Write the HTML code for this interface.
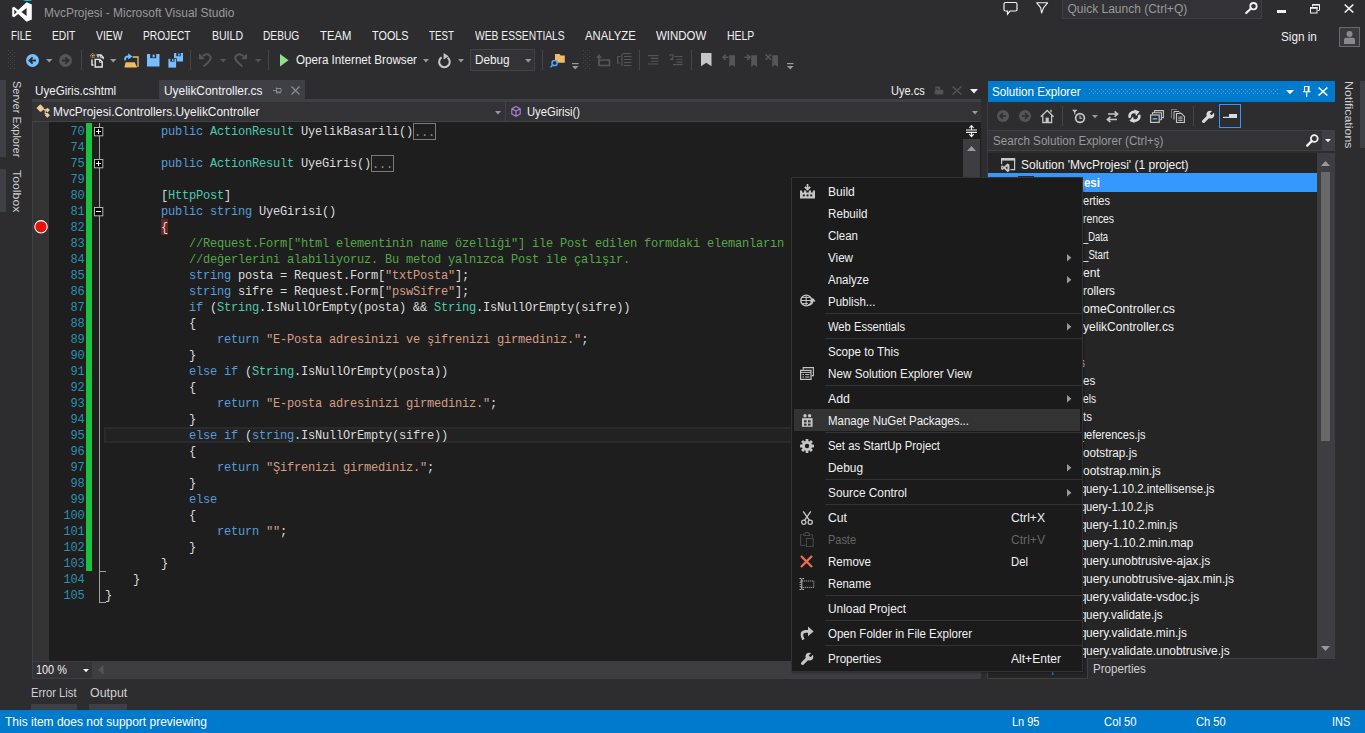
<!DOCTYPE html>
<html lang="tr"><head><meta charset="utf-8"><title>MvcProjesi - Microsoft Visual Studio</title>
<style>
*{margin:0;padding:0;box-sizing:border-box}
html,body{width:1365px;height:733px;overflow:hidden;background:#2d2d30}
body{font-family:"Liberation Sans",sans-serif;font-size:12px;color:#f1f1f1;position:relative}
#app{position:absolute;left:0;top:0;width:1365px;height:733px;overflow:hidden;background:#2d2d30}
.a{position:absolute}
.t{position:absolute;white-space:nowrap;line-height:16px;height:16px}
svg{position:absolute;overflow:visible}
.mono{font-family:"Liberation Mono",monospace;font-size:12px;letter-spacing:-0.2px}
.k{color:#569cd6}.ty{color:#4ec9b0}.s{color:#d69d85}.c{color:#57a64a}.p{color:#dcdcdc}
.ln{position:absolute;left:32px;width:52.5px;text-align:right;color:#2b91af;height:16px;line-height:16px;white-space:pre}
.cl{position:absolute;left:105px;height:16px;line-height:16px;white-space:pre;color:#dcdcdc}
</style></head>
<body><div id="app">
<!-- p10_top -->
<div class="a" style="left:19.5px;top:-6.6px;width:15.5px;height:8px;border-radius:50%;background:#00d8ff"></div>
<svg style="left:12px;top:2px" width="20" height="20" viewBox="0 0 20 20"><path d="M14.6 0.2 L19.8 2.4 V17.6 L14.6 19.8 L6.2 11.9 L2 15.2 L0.2 14.3 V5.7 L2 4.8 L6.2 8.1 Z M14.6 6 L9.4 10 L14.6 14 Z M2.3 7.6 V12.4 L4.9 10 Z" fill="#ffffff" fill-rule="evenodd"/></svg>
<div class="t" style="left:44.4px;top:5px;color:#999999;font-size:12.3px;font-weight:normal;transform:scaleX(0.9719);transform-origin:0 50%;">MvcProjesi - Microsoft Visual Studio</div>
<svg style="left:1003px;top:1px" width="16" height="15" viewBox="0 0 16 15"><path d="M2.5 1.5 H12.5 Q14 1.5 14 3 V8.5 Q14 10 12.5 10 H7 L4.5 13 V10 H2.5 Q1 10 1 8.5 V3 Q1 1.5 2.5 1.5 Z" fill="none" stroke="#f1f1f1" stroke-width="1.2"/></svg>
<svg style="left:1036px;top:2px" width="13" height="12" viewBox="0 0 13 12"><path d="M0.8 0.8 H11.6 L7.6 5.6 L5.6 11 L4.6 5.6 Z" fill="none" stroke="#f1f1f1" stroke-width="1.1" stroke-linejoin="round"/></svg>
<div class="a" style="left:1062px;top:0px;width:200px;height:19px;background:#333337;border:1px solid #3f3f46;border-top:none"></div>
<div class="t" style="left:1067.5px;top:1px;color:#999999;">Quick Launch (Ctrl+Q)</div>
<svg style="left:1245px;top:2px" width="13" height="12" viewBox="0 0 13 12"><circle cx="8.5" cy="4.2" r="3.2" fill="none" stroke="#f1f1f1" stroke-width="1.8"/><path d="M6 6.5 L1.2 11" stroke="#f1f1f1" stroke-width="2.2" stroke-linecap="round"/></svg>
<div class="a" style="left:1276.5px;top:9.5px;width:9.5px;height:3px;background:#f1f1f1;"></div>
<svg style="left:1310px;top:4px" width="10" height="10" viewBox="0 0 10 10"><path d="M2.5 0.5 H9.5 V6.5 H7.5 M2.5 0.5 V2.5" fill="none" stroke="#f1f1f1" stroke-width="1"/><rect x="2.5" y="0" width="7" height="1.6" fill="#f1f1f1"/><rect x="0.5" y="3.5" width="6.5" height="5.5" fill="none" stroke="#f1f1f1" stroke-width="1"/><rect x="0" y="3" width="7.5" height="1.8" fill="#f1f1f1"/></svg>
<svg style="left:1344px;top:4px" width="10" height="9" viewBox="0 0 10 9"><path d="M0.7 0.5 L9.3 8.5 M9.3 0.5 L0.7 8.5" stroke="#f1f1f1" stroke-width="1.7"/></svg>
<div class="t" style="left:1281.2px;top:29px;color:#f1f1f1;font-size:12.3px;font-weight:normal;transform:scaleX(0.9519);transform-origin:0 50%;">Sign in</div>
<div class="a" style="left:1339px;top:27px;width:21px;height:20px;background:#3a3a3d;border:1px solid #6a6a6e"></div>
<svg style="left:1343px;top:30px" width="13" height="14" viewBox="0 0 13 14"><circle cx="6.5" cy="4" r="3" fill="#8a8a8d"/><path d="M1 14 V9.5 Q1 7.8 3 7.8 H10 Q12 7.8 12 9.5 V14 Z" fill="#8a8a8d"/></svg>
<div class="t" style="left:11.1px;top:27.5px;color:#f1f1f1;font-size:12.4px;font-weight:normal;transform:scaleX(0.7833);transform-origin:0 50%;">FILE</div>
<div class="t" style="left:52.2px;top:27.5px;color:#f1f1f1;font-size:12.4px;font-weight:normal;transform:scaleX(0.8288);transform-origin:0 50%;">EDIT</div>
<div class="t" style="left:96.1px;top:27.5px;color:#f1f1f1;font-size:12.4px;font-weight:normal;transform:scaleX(0.8335);transform-origin:0 50%;">VIEW</div>
<div class="t" style="left:143px;top:27.5px;color:#f1f1f1;font-size:12.4px;font-weight:normal;transform:scaleX(0.8214);transform-origin:0 50%;">PROJECT</div>
<div class="t" style="left:211.6px;top:27.5px;color:#f1f1f1;font-size:12.4px;font-weight:normal;transform:scaleX(0.8493);transform-origin:0 50%;">BUILD</div>
<div class="t" style="left:263.2px;top:27.5px;color:#f1f1f1;font-size:12.4px;font-weight:normal;transform:scaleX(0.8235);transform-origin:0 50%;">DEBUG</div>
<div class="t" style="left:320.3px;top:27.5px;color:#f1f1f1;font-size:12.4px;font-weight:normal;transform:scaleX(0.9093);transform-origin:0 50%;">TEAM</div>
<div class="t" style="left:372.2px;top:27.5px;color:#f1f1f1;font-size:12.4px;font-weight:normal;transform:scaleX(0.8760);transform-origin:0 50%;">TOOLS</div>
<div class="t" style="left:429.3px;top:27.5px;color:#f1f1f1;font-size:12.4px;font-weight:normal;transform:scaleX(0.7862);transform-origin:0 50%;">TEST</div>
<div class="t" style="left:475.3px;top:27.5px;color:#f1f1f1;font-size:12.4px;font-weight:normal;transform:scaleX(0.8297);transform-origin:0 50%;">WEB ESSENTIALS</div>
<div class="t" style="left:585.2px;top:27.5px;color:#f1f1f1;font-size:12.4px;font-weight:normal;transform:scaleX(0.9127);transform-origin:0 50%;">ANALYZE</div>
<div class="t" style="left:656.4px;top:27.5px;color:#f1f1f1;font-size:12.4px;font-weight:normal;transform:scaleX(0.9269);transform-origin:0 50%;">WINDOW</div>
<div class="t" style="left:727.3px;top:27.5px;color:#f1f1f1;font-size:12.4px;font-weight:normal;transform:scaleX(0.8432);transform-origin:0 50%;">HELP</div>
<!-- p20_toolbar -->
<svg style="left:8px;top:50px" width="8" height="20" viewBox="0 0 8 20"><rect x="0" y="0" width="1" height="1" fill="#434347"/><rect x="4" y="0" width="1" height="1" fill="#434347"/><rect x="2" y="2" width="1" height="1" fill="#434347"/><rect x="6" y="2" width="1" height="1" fill="#434347"/><rect x="0" y="4" width="1" height="1" fill="#434347"/><rect x="4" y="4" width="1" height="1" fill="#434347"/><rect x="2" y="6" width="1" height="1" fill="#434347"/><rect x="6" y="6" width="1" height="1" fill="#434347"/><rect x="0" y="8" width="1" height="1" fill="#434347"/><rect x="4" y="8" width="1" height="1" fill="#434347"/><rect x="2" y="10" width="1" height="1" fill="#434347"/><rect x="6" y="10" width="1" height="1" fill="#434347"/><rect x="0" y="12" width="1" height="1" fill="#434347"/><rect x="4" y="12" width="1" height="1" fill="#434347"/><rect x="2" y="14" width="1" height="1" fill="#434347"/><rect x="6" y="14" width="1" height="1" fill="#434347"/><rect x="0" y="16" width="1" height="1" fill="#434347"/><rect x="4" y="16" width="1" height="1" fill="#434347"/><rect x="2" y="18" width="1" height="1" fill="#434347"/><rect x="6" y="18" width="1" height="1" fill="#434347"/></svg>
<svg style="left:25.5px;top:53.5px" width="13" height="13" viewBox="0 0 13 13"><circle cx="6.5" cy="6.5" r="6.5" fill="#75beff"/><path d="M10 6.5 H3.8 M6.6 3.4 L3.4 6.5 L6.6 9.6" fill="none" stroke="#2d2d30" stroke-width="1.8"/></svg>
<svg style="left:45.5px;top:58.8px" width="6.5" height="3.6" viewBox="0 0 6.5 3.6"><path d="M0 0H6.5L3.25 3.6Z" fill="#999"/></svg>
<svg style="left:59px;top:53.5px" width="13" height="13" viewBox="0 0 13 13"><circle cx="6.5" cy="6.5" r="6.5" fill="#555557"/><path d="M3 6.5 H9.2 M6.4 3.4 L9.6 6.5 L6.4 9.6" fill="none" stroke="#2d2d30" stroke-width="1.8"/></svg>
<div class="a" style="left:81px;top:50px;width:1px;height:20px;background:#464649;"></div>
<svg style="left:89.5px;top:52.5px" width="14" height="15" viewBox="0 0 14 15"><path d="M6.6 2 H11 L13.2 4.2 V6.2" fill="none" stroke="#e6e6e6" stroke-width="1.3"/><path d="M7 3.8 H9.4" stroke="#e6e6e6" stroke-width="1"/><path d="M10.6 1.8 V4.6 H13.2" fill="none" stroke="#e6e6e6" stroke-width="0.9"/><path d="M2 6.4 V12 H3.6" fill="none" stroke="#e6e6e6" stroke-width="1.4"/><path d="M5.2 6.4 H9.8 L12.2 8.8 V14 H5.2 Z" fill="#2d2d30" stroke="#e6e6e6" stroke-width="1.4"/><path d="M9.4 6.6 V9.2 H12" fill="none" stroke="#e6e6e6" stroke-width="0.9"/><path d="M2.8 0.2 V5.4 M0.2 2.8 H5.4 M0.9 0.9 L4.7 4.7 M4.7 0.9 L0.9 4.7" stroke="#f5c55e" stroke-width="1" stroke-dasharray="1 1"/></svg>
<svg style="left:110px;top:58.8px" width="6.5" height="3.6" viewBox="0 0 6.5 3.6"><path d="M0 0H6.5L3.25 3.6Z" fill="#999"/></svg>
<svg style="left:123.5px;top:52.5px" width="15" height="15" viewBox="0 0 15 15"><path d="M8.6 4 H14 V14" fill="none" stroke="#eebb66" stroke-width="1.3"/><path d="M0.4 14.4 L1.6 9.2 H10.8 L13.2 14.4 Z" fill="#eebb66"/><path d="M1.4 7.4 Q0 3.2 5 3.4" fill="none" stroke="#6ebeff" stroke-width="2"/><path d="M4.2 0.2 L8.4 3.4 L4.2 6.6 Z" fill="#6ebeff"/></svg>
<svg style="left:147px;top:53.5px" width="12.5" height="12.5" viewBox="0 0 12.5 12.5"><path d="M0 0 H12.5 V12.5 H0 Z" fill="#75beff"/><rect x="3.2" y="0" width="6" height="4.2" fill="#2d2d30"/><rect x="5.6" y="0.6" width="2" height="2.8" fill="#75beff"/></svg>
<svg style="left:168px;top:52.5px" width="15" height="15" viewBox="0 0 15 15"><path d="M6 0 H15 V8.5 H6 Z" fill="#75beff"/><rect x="8.3" y="0" width="4.5" height="3.2" fill="#2d2d30"/><rect x="10.2" y="0.5" width="1.5" height="2.2" fill="#75beff"/><path d="M0 5.5 H8.5 V15 H0 Z" fill="#75beff" stroke="#2d2d30" stroke-width="0.8"/><rect x="2.3" y="5.7" width="4.2" height="3" fill="#2d2d30"/><rect x="4" y="6.1" width="1.4" height="2.1" fill="#75beff"/></svg>
<div class="a" style="left:190px;top:50px;width:1px;height:20px;background:#464649;"></div>
<svg style="left:199px;top:53px" width="13" height="14" viewBox="0 0 13 14"><path d="M3.6 3.4 Q7 -0.3 10.6 2.4 Q13.4 5.2 9 9.6 L4.6 13.4" fill="none" stroke="#555557" stroke-width="2"/><path d="M0 0.3 V6.2 H6 Z" fill="#555557"/></svg>
<svg style="left:220px;top:58.8px" width="6.5" height="3.6" viewBox="0 0 6.5 3.6"><path d="M0 0H6.5L3.25 3.6Z" fill="#555557"/></svg>
<svg style="left:233.5px;top:53px" width="13" height="14" viewBox="0 0 13 14"><path d="M9.4 3.4 Q6 -0.3 2.4 2.4 Q-0.4 5.2 4 9.6 L8.4 13.4" fill="none" stroke="#555557" stroke-width="2"/><path d="M13 0.3 V6.2 H7 Z" fill="#555557"/></svg>
<svg style="left:255px;top:58.8px" width="6.5" height="3.6" viewBox="0 0 6.5 3.6"><path d="M0 0H6.5L3.25 3.6Z" fill="#555557"/></svg>
<div class="a" style="left:268px;top:50px;width:1px;height:20px;background:#464649;"></div>
<svg style="left:280px;top:54px" width="9" height="13" viewBox="0 0 9 13"><path d="M0 0 L8.5 6.3 L0 12.6 Z" fill="#8ae28a"/></svg>
<div class="t" style="left:296px;top:51.6px;color:#f1f1f1;font-size:12.3px;font-weight:normal;transform:scaleX(0.9467);transform-origin:0 50%;">Opera Internet Browser</div>
<svg style="left:423px;top:58.8px" width="6" height="3.6" viewBox="0 0 6 3.6"><path d="M0 0H6L3.0 3.6Z" fill="#999"/></svg>
<svg style="left:437.5px;top:53px" width="13" height="14.5" viewBox="0 0 13 14.5"><path d="M9.6 4.6 A5.3 5.3 0 1 1 3.6 4.4" fill="none" stroke="#c8c8c8" stroke-width="2"/><path d="M5.6 0 L10.6 3.2 L5.6 6.4 Z" fill="#c8c8c8"/></svg>
<svg style="left:458px;top:58.8px" width="6" height="3.6" viewBox="0 0 6 3.6"><path d="M0 0H6L3.0 3.6Z" fill="#999"/></svg>
<div class="a" style="left:470px;top:49px;width:65px;height:22px;background:#333337;border:1px solid #434346"></div>
<div class="t" style="left:474.5px;top:51.6px;color:#f1f1f1;font-size:12.3px;font-weight:normal;transform:scaleX(0.9517);transform-origin:0 50%;">Debug</div>
<svg style="left:525px;top:58.8px" width="6.5" height="3.6" viewBox="0 0 6.5 3.6"><path d="M0 0H6.5L3.25 3.6Z" fill="#999"/></svg>
<div class="a" style="left:542px;top:50px;width:1px;height:20px;background:#464649;"></div>
<svg style="left:550px;top:53px" width="15" height="15" viewBox="0 0 15 15"><path d="M5 1 H9.5 L10.8 2.5 H14.8 V9.8 H5 Z" fill="#eebb66"/><circle cx="4.6" cy="10" r="2.6" fill="#2d2d30" stroke="#4da6ff" stroke-width="1.5"/><path d="M2.8 11.8 L0.6 14.2" stroke="#4da6ff" stroke-width="1.7"/></svg>
<svg style="left:572px;top:62.5px" width="7" height="7" viewBox="0 0 7 7"><rect x="0" y="0" width="6.5" height="1.2" fill="#999"/><path d="M0 3 H6.5 L3.25 6.5 Z" fill="#999"/></svg>
<svg style="left:583px;top:50px" width="8" height="20" viewBox="0 0 8 20"><rect x="0" y="0" width="1" height="1" fill="#434347"/><rect x="4" y="0" width="1" height="1" fill="#434347"/><rect x="2" y="2" width="1" height="1" fill="#434347"/><rect x="6" y="2" width="1" height="1" fill="#434347"/><rect x="0" y="4" width="1" height="1" fill="#434347"/><rect x="4" y="4" width="1" height="1" fill="#434347"/><rect x="2" y="6" width="1" height="1" fill="#434347"/><rect x="6" y="6" width="1" height="1" fill="#434347"/><rect x="0" y="8" width="1" height="1" fill="#434347"/><rect x="4" y="8" width="1" height="1" fill="#434347"/><rect x="2" y="10" width="1" height="1" fill="#434347"/><rect x="6" y="10" width="1" height="1" fill="#434347"/><rect x="0" y="12" width="1" height="1" fill="#434347"/><rect x="4" y="12" width="1" height="1" fill="#434347"/><rect x="2" y="14" width="1" height="1" fill="#434347"/><rect x="6" y="14" width="1" height="1" fill="#434347"/><rect x="0" y="16" width="1" height="1" fill="#434347"/><rect x="4" y="16" width="1" height="1" fill="#434347"/><rect x="2" y="18" width="1" height="1" fill="#434347"/><rect x="6" y="18" width="1" height="1" fill="#434347"/></svg>
<svg style="left:596px;top:54px" width="14" height="12" viewBox="0 0 14 12"><path d="M3 0 L6 4 H0 Z" fill="#555557"/><rect x="2.3" y="3" width="1.5" height="8.5" fill="#555557"/><rect x="3" y="6" width="10.5" height="5.5" fill="none" stroke="#555557" stroke-width="1.6"/></svg>
<svg style="left:617px;top:53px" width="15" height="13.5" viewBox="0 0 15 13.5"><path d="M5.5 0.5 H14.5 M7 3.5 H14.5 M7 6.5 H14.5 M7 9.5 H14.5 M7 12.5 H14.5" stroke="#555557" stroke-width="1.2"/><path d="M5 1 V13 M0.6 3.5 H3.5 M0.6 3.5 V10 H3" fill="none" stroke="#555557" stroke-width="1.2"/></svg>
<div class="a" style="left:639px;top:50px;width:1px;height:20px;background:#464649;"></div>
<svg style="left:648px;top:55px" width="11" height="9.5" viewBox="0 0 11 9.5"><path d="M0 0.6 H10.5 M3 3.4 H10.5 M3 6.2 H10.5 M0 9 H10.5" stroke="#555557" stroke-width="1.1"/></svg>
<svg style="left:669px;top:54px" width="14" height="11" viewBox="0 0 14 11"><path d="M5.5 2.5 H13.5 M7.5 5.3 H13.5 M7.5 8.1 H13.5 M4 10.6 H13.5" stroke="#555557" stroke-width="1.1"/><path d="M0.8 2.2 Q1 0.5 2.8 0.6 Q4.6 0.8 4.2 2.6 Q3.8 4 2.5 5 M1 5.4 H4.4" fill="none" stroke="#555557" stroke-width="1.3"/></svg>
<div class="a" style="left:691px;top:50px;width:1px;height:20px;background:#464649;"></div>
<svg style="left:701px;top:53px" width="11" height="13.5" viewBox="0 0 11 13.5"><path d="M0 0 H10.5 V13.2 L5.25 9.8 L0 13.2 Z" fill="#c5c5c5"/></svg>
<svg style="left:722px;top:53.5px" width="13.5" height="13.5" viewBox="0 0 13.5 13.5"><path d="M6.5 3.2 H1.4 M3.8 0.6 L1 3.2 L3.8 5.8" fill="none" stroke="#555557" stroke-width="1.6"/><path d="M7.2 1.2 H13 V13 L10.1 10.8 L7.2 13 Z" fill="#555557"/></svg>
<svg style="left:744px;top:53.5px" width="13.5" height="13.5" viewBox="0 0 13.5 13.5"><path d="M0.5 3.2 H5.6 M3.2 0.6 L6 3.2 L3.2 5.8" fill="none" stroke="#555557" stroke-width="1.6"/><path d="M7.2 1.2 H13 V13 L10.1 10.8 L7.2 13 Z" fill="#555557"/></svg>
<svg style="left:765px;top:53.5px" width="13.5" height="13.5" viewBox="0 0 13.5 13.5"><path d="M0.6 0.4 L6 5.8 M6 0.4 L0.6 5.8" fill="none" stroke="#555557" stroke-width="1.6"/><path d="M7.2 1.2 H13 V13 L10.1 10.8 L7.2 13 Z" fill="#555557"/></svg>
<svg style="left:786.5px;top:62.5px" width="7" height="7" viewBox="0 0 7 7"><rect x="0" y="0" width="6.5" height="1.2" fill="#999"/><path d="M0 3 H6.5 L3.25 6.5 Z" fill="#999"/></svg>
<!-- p30_editor -->
<div class="a" style="left:0px;top:80px;width:6px;height:77px;background:#3f3f46;"></div>
<div class="a" style="left:0px;top:169px;width:6px;height:43px;background:#3f3f46;"></div>
<div class="t" style="left:25.3px;top:80.8px;color:#d0d0d0;font-size:11.8px;transform-origin:0 0;transform:rotate(90deg) scaleX(0.9322)">Server Explorer</div>
<div class="t" style="left:25.3px;top:169.6px;color:#d0d0d0;font-size:11.8px;transform-origin:0 0;transform:rotate(90deg) scaleX(1.0425)">Toolbox</div>
<div class="a" style="left:1360px;top:80.5px;width:5px;height:67px;background:#3f3f46;"></div>
<div class="t" style="left:1356.5px;top:80.5px;color:#d0d0d0;font-size:11.8px;transform-origin:0 0;transform:rotate(90deg) scaleX(1.0503)">Notifications</div>
<div class="t" style="left:35.4px;top:82.5px;color:#f1f1f1;font-size:12.3px;font-weight:normal;transform:scaleX(0.9432);transform-origin:0 50%;">UyeGiris.cshtml</div>
<div class="a" style="left:159px;top:80px;width:146px;height:21px;background:#3f3f46;"></div>
<div class="t" style="left:164.4px;top:82.5px;color:#f1f1f1;font-size:12.3px;font-weight:normal;transform:scaleX(0.9663);transform-origin:0 50%;">UyelikController.cs</div>
<svg style="left:273px;top:86px" width="9" height="9" viewBox="0 0 9 9"><path d="M0 4.5 H3.5 M3.5 1.5 V7.5 M3.5 2.5 H8 V6 H3.5 M3.5 6.8 H8" fill="none" stroke="#8b8b8e" stroke-width="1"/></svg>
<svg style="left:291px;top:86px" width="9" height="9" viewBox="0 0 9 9"><path d="M0.5 0.5 L8.5 8.5 M8.5 0.5 L0.5 8.5" stroke="#8b8b8e" stroke-width="1.3"/></svg>
<div class="t" style="left:890.5px;top:82.5px;color:#f1f1f1;font-size:12.3px;font-weight:normal;transform:scaleX(0.8964);transform-origin:0 50%;">Uye.cs</div>
<svg style="left:934px;top:86px" width="10" height="9" viewBox="0 0 10 9"><path d="M2 0.5 V4 M1.2 4.2 H8.8 V8 H1.2 Z M2 1 H5.5 V4" fill="#555557" stroke="#555557" stroke-width="1"/></svg>
<svg style="left:952px;top:86px" width="10" height="9" viewBox="0 0 10 9"><path d="M0.5 0.5 L9.5 8.5 M9.5 0.5 L0.5 8.5" stroke="#555557" stroke-width="1.4"/></svg>
<svg style="left:970px;top:89.3px" width="8" height="4.5" viewBox="0 0 8 4.5"><path d="M0 0H8L4.0 4.5Z" fill="#f1f1f1"/></svg>
<div class="a" style="left:32px;top:99px;width:949px;height:3px;background:#3f3f46;"></div>
<div class="a" style="left:979px;top:99px;width:2px;height:23px;background:#3f3f46;"></div>
<div class="a" style="left:32px;top:101.5px;width:949px;height:20px;background:#333337;"></div>
<div class="a" style="left:32px;top:121px;width:949px;height:1px;background:#434346;"></div>
<div class="a" style="left:505px;top:102px;width:1px;height:19px;background:#434346;"></div>
<div class="t" style="left:53.3px;top:103.5px;color:#f1f1f1;font-size:12.3px;font-weight:normal;transform:scaleX(0.9686);transform-origin:0 50%;">MvcProjesi.Controllers.UyelikController</div>
<svg style="left:495px;top:110.5px" width="6" height="3.5" viewBox="0 0 6 3.5"><path d="M0 0H6L3.0 3.5Z" fill="#999"/></svg>
<svg style="left:971.5px;top:110.5px" width="6" height="3.5" viewBox="0 0 6 3.5"><path d="M0 0H6L3.0 3.5Z" fill="#999"/></svg>
<svg style="left:36px;top:104px" width="15" height="14.5" viewBox="0 0 15 14.5"><rect x="1.6" y="1.4" width="5.4" height="5.4" fill="#eecb96" transform="rotate(45 4.3 4.1)"/><rect x="3.4" y="3.4" width="3.6" height="3.6" fill="#eecb96" transform="rotate(45 5.2 5.2)"/><path d="M6.5 5.5 H9.2 V9.6 H11" fill="none" stroke="#eecb96" stroke-width="1.1"/><rect x="9.8" y="4.4" width="3.4" height="3.4" fill="#eecb96" transform="rotate(45 11.5 6.1)"/><rect x="9.6" y="9.4" width="3.6" height="3.6" fill="#eecb96" transform="rotate(45 11.4 11.2)"/></svg>
<svg style="left:510.5px;top:106px" width="10" height="11" viewBox="0 0 10 11"><path d="M5 0.6 L9.2 2.8 V8 L5 10.3 L0.8 8 V2.8 Z M0.8 2.8 L5 5 L9.2 2.8 M5 5 V10.3" fill="none" stroke="#b180d7" stroke-width="1.1" stroke-linejoin="round"/></svg>
<div class="t" style="left:527px;top:103.5px;color:#f1f1f1;font-size:12.3px;font-weight:normal;transform:scaleX(0.9128);transform-origin:0 50%;">UyeGirisi()</div>
<div class="a" style="left:31.5px;top:122px;width:949px;height:539px;background:#1e1e1e;"></div>
<div class="a" style="left:31.5px;top:122px;width:1px;height:557px;background:#3f3f46;"></div>
<div class="a" style="left:32.5px;top:122px;width:16.5px;height:539px;background:#333333;"></div>
<div class="a" style="left:86.3px;top:122.5px;width:5.7px;height:448.5px;background:#19c23c;"></div>
<div class="a" style="left:98.8px;top:122.5px;width:1px;height:480px;background:#a0a0a0;"></div>
<div class="a" style="left:98.8px;top:570.5px;width:7px;height:1px;background:#a0a0a0;"></div>
<div class="a" style="left:98.8px;top:602px;width:7px;height:1px;background:#a0a0a0;"></div>
<svg style="left:94px;top:127.0px" width="9" height="9" viewBox="0 0 9 9"><rect x="0.5" y="0.5" width="8.3" height="8.3" fill="#000" stroke="#b4b4b4" stroke-width="1"/><rect x="2" y="4" width="5" height="1" fill="#fff"/><rect x="4" y="2" width="1" height="5" fill="#fff"/></svg>
<svg style="left:94px;top:159.0px" width="9" height="9" viewBox="0 0 9 9"><rect x="0.5" y="0.5" width="8.3" height="8.3" fill="#000" stroke="#b4b4b4" stroke-width="1"/><rect x="2" y="4" width="5" height="1" fill="#fff"/><rect x="4" y="2" width="1" height="5" fill="#fff"/></svg>
<svg style="left:94px;top:207.0px" width="9" height="9" viewBox="0 0 9 9"><rect x="0.5" y="0.5" width="8.3" height="8.3" fill="#000" stroke="#b4b4b4" stroke-width="1"/><rect x="2" y="4" width="5" height="1" fill="#fff"/></svg>
<div class="a" style="left:103.5px;top:427px;width:859.5px;height:16px;background:#222223;border:2px solid #2a2a2b"></div>
<svg style="left:33.5px;top:219.7px" width="14" height="14" viewBox="0 0 14 14"><circle cx="7" cy="6.8" r="6.2" fill="#e81008" stroke="#ffffff" stroke-width="1.1"/></svg>
<div class="a" style="left:161px;top:219px;width:7px;height:16px;background:#6b2524;"></div>
<div class="ln mono" style="top:124px">70</div>
<div class="cl mono" style="top:124px">        <span class="k">public</span> <span class="ty">ActionResult</span> UyelikBasarili()</div>
<div class="ln mono" style="top:140px">74</div>
<div class="ln mono" style="top:156px">75</div>
<div class="cl mono" style="top:156px">        <span class="k">public</span> <span class="ty">ActionResult</span> UyeGiris()</div>
<div class="ln mono" style="top:172px">79</div>
<div class="ln mono" style="top:188px">80</div>
<div class="cl mono" style="top:188px">        [<span class="ty">HttpPost</span>]</div>
<div class="ln mono" style="top:204px">81</div>
<div class="cl mono" style="top:204px">        <span class="k">public</span> <span class="k">string</span> UyeGirisi()</div>
<div class="ln mono" style="top:220px">82</div>
<div class="cl mono" style="top:220px">        {</div>
<div class="ln mono" style="top:236px">83</div>
<div class="cl mono" style="top:236px">            <span class="c">//Request.Form["html elementinin name özelliği"] ile Post edilen formdaki elemanların</span></div>
<div class="ln mono" style="top:252px">84</div>
<div class="cl mono" style="top:252px">            <span class="c">//değerlerini alabiliyoruz. Bu metod yalnızca Post ile çalışır.</span></div>
<div class="ln mono" style="top:268px">85</div>
<div class="cl mono" style="top:268px">            <span class="k">string</span> posta = Request.Form[<span class="s">"txtPosta"</span>];</div>
<div class="ln mono" style="top:284px">86</div>
<div class="cl mono" style="top:284px">            <span class="k">string</span> sifre = Request.Form[<span class="s">"pswSifre"</span>];</div>
<div class="ln mono" style="top:300px">87</div>
<div class="cl mono" style="top:300px">            <span class="k">if</span> (<span class="ty">String</span>.IsNullOrEmpty(posta) &amp;&amp; <span class="ty">String</span>.IsNullOrEmpty(sifre))</div>
<div class="ln mono" style="top:316px">88</div>
<div class="cl mono" style="top:316px">            {</div>
<div class="ln mono" style="top:332px">89</div>
<div class="cl mono" style="top:332px">                <span class="k">return</span> <span class="s">"E-Posta adresinizi ve şifrenizi girmediniz."</span>;</div>
<div class="ln mono" style="top:348px">90</div>
<div class="cl mono" style="top:348px">            }</div>
<div class="ln mono" style="top:364px">91</div>
<div class="cl mono" style="top:364px">            <span class="k">else</span> <span class="k">if</span> (<span class="ty">String</span>.IsNullOrEmpty(posta))</div>
<div class="ln mono" style="top:380px">92</div>
<div class="cl mono" style="top:380px">            {</div>
<div class="ln mono" style="top:396px">93</div>
<div class="cl mono" style="top:396px">                <span class="k">return</span> <span class="s">"E-posta adresinizi girmediniz."</span>;</div>
<div class="ln mono" style="top:412px">94</div>
<div class="cl mono" style="top:412px">            }</div>
<div class="ln mono" style="top:428px">95</div>
<div class="cl mono" style="top:428px">            <span class="k">else</span> <span class="k">if</span> (<span class="k">string</span>.IsNullOrEmpty(sifre))</div>
<div class="ln mono" style="top:444px">96</div>
<div class="cl mono" style="top:444px">            {</div>
<div class="ln mono" style="top:460px">97</div>
<div class="cl mono" style="top:460px">                <span class="k">return</span> <span class="s">"Şifrenizi girmediniz."</span>;</div>
<div class="ln mono" style="top:476px">98</div>
<div class="cl mono" style="top:476px">            }</div>
<div class="ln mono" style="top:492px">99</div>
<div class="cl mono" style="top:492px">            <span class="k">else</span></div>
<div class="ln mono" style="top:508px">100</div>
<div class="cl mono" style="top:508px">            {</div>
<div class="ln mono" style="top:524px">101</div>
<div class="cl mono" style="top:524px">                <span class="k">return</span> <span class="s">""</span>;</div>
<div class="ln mono" style="top:540px">102</div>
<div class="cl mono" style="top:540px">            }</div>
<div class="ln mono" style="top:556px">103</div>
<div class="cl mono" style="top:556px">        }</div>
<div class="ln mono" style="top:572px">104</div>
<div class="cl mono" style="top:572px">    }</div>
<div class="ln mono" style="top:588px">105</div>
<div class="cl mono" style="top:588px">}</div>
<div class="a mono" style="left:413px;top:122.9px;width:23px;height:17px;border:1px solid #7a7a7a;color:#8c8c8c;line-height:15px;padding-top:2.6px;text-align:center;overflow:hidden">...</div>
<div class="a mono" style="left:371px;top:154.9px;width:23px;height:17px;border:1px solid #7a7a7a;color:#8c8c8c;line-height:15px;padding-top:2.6px;text-align:center;overflow:hidden">...</div>
<div class="a" style="left:963px;top:122px;width:17px;height:539px;background:#3e3e42;"></div>
<div class="a" style="left:963px;top:122px;width:17px;height:17px;background:#1e1e1e;"></div>
<svg style="left:966px;top:125px" width="11" height="12" viewBox="0 0 11 12"><path d="M0 5 H11 M0 7.4 H11 M5.5 0.8 V5 M5.5 7.4 V11.4 M3.3 3 L5.5 0.6 L7.7 3 M3.3 9.2 L5.5 11.6 L7.7 9.2" fill="none" stroke="#f1f1f1" stroke-width="1.1"/></svg>
<svg style="left:967px;top:146px" width="9" height="5" viewBox="0 0 9 5"><path d="M0 5 L4.5 0 L9 5 Z" fill="#999"/></svg>
<div class="a" style="left:32.5px;top:661px;width:948px;height:18px;background:#3e3e42;"></div>
<div class="a" style="left:32.5px;top:662px;width:59px;height:15.5px;background:#333337;"></div>
<div class="t" style="left:35.8px;top:662px;color:#f1f1f1;font-size:12.3px;font-weight:normal;transform:scaleX(0.8832);transform-origin:0 50%;">100 %</div>
<svg style="left:83px;top:668.8px" width="6" height="3.3" viewBox="0 0 6 3.3"><path d="M0 0H6L3.0 3.3Z" fill="#f1f1f1"/></svg>
<svg style="left:97.8px;top:665.3px" width="5.5" height="9.5" viewBox="0 0 5.5 9.5"><path d="M5.5 0 L0 4.7 L5.5 9.5 Z" fill="#555558"/></svg>
<div class="t" style="left:31.4px;top:684.5px;color:#d0d0d0;font-size:12.3px;font-weight:normal;transform:scaleX(0.9140);transform-origin:0 50%;">Error List</div>
<div class="t" style="left:89.5px;top:684.5px;color:#d0d0d0;font-size:12.3px;font-weight:normal;transform:scaleX(1.0102);transform-origin:0 50%;">Output</div>
<div class="a" style="left:31px;top:704.3px;width:46px;height:6px;background:#3f3f46;"></div>
<div class="a" style="left:89px;top:704.3px;width:38px;height:6px;background:#3f3f46;"></div>
<div class="a" style="left:0px;top:710px;width:1365px;height:23px;background:#007acc;"></div>
<div class="t" style="left:4.8px;top:714px;color:#ffffff;font-size:12.3px;font-weight:normal;transform:scaleX(0.9744);transform-origin:0 50%;">This item does not support previewing</div>
<div class="t" style="left:1012.2px;top:714px;color:#ffffff;font-size:12.3px;font-weight:normal;transform:scaleX(0.8902);transform-origin:0 50%;">Ln 95</div>
<div class="t" style="left:1104.4px;top:714px;color:#ffffff;font-size:12.3px;font-weight:normal;transform:scaleX(0.9171);transform-origin:0 50%;">Col 50</div>
<div class="t" style="left:1196.2px;top:714px;color:#ffffff;font-size:12.3px;font-weight:normal;transform:scaleX(0.9078);transform-origin:0 50%;">Ch 50</div>
<div class="t" style="left:1331.7px;top:714px;color:#ffffff;font-size:12.3px;font-weight:normal;transform:scaleX(0.8927);transform-origin:0 50%;">INS</div>
<!-- p40_solexp -->
<div class="a" style="left:988px;top:81px;width:346.5px;height:598px;background:#2d2d30;"></div>
<div class="a" style="left:987.4px;top:102px;width:1px;height:577px;background:#3a3a3e;"></div>
<div class="a" style="left:988px;top:81px;width:346.5px;height:21px;background:#007acc;"></div>
<div class="t" style="left:992.4px;top:83.5px;color:#ffffff;font-size:12.3px;font-weight:normal;transform:scaleX(0.9460);transform-origin:0 50%;">Solution Explorer</div>
<svg style="left:1089px;top:89px" width="189" height="5" viewBox="0 0 189 5"><rect x="0" y="0" width="1" height="1" fill="#59a8de"/><rect x="4" y="0" width="1" height="1" fill="#59a8de"/><rect x="8" y="0" width="1" height="1" fill="#59a8de"/><rect x="12" y="0" width="1" height="1" fill="#59a8de"/><rect x="16" y="0" width="1" height="1" fill="#59a8de"/><rect x="20" y="0" width="1" height="1" fill="#59a8de"/><rect x="24" y="0" width="1" height="1" fill="#59a8de"/><rect x="28" y="0" width="1" height="1" fill="#59a8de"/><rect x="32" y="0" width="1" height="1" fill="#59a8de"/><rect x="36" y="0" width="1" height="1" fill="#59a8de"/><rect x="40" y="0" width="1" height="1" fill="#59a8de"/><rect x="44" y="0" width="1" height="1" fill="#59a8de"/><rect x="48" y="0" width="1" height="1" fill="#59a8de"/><rect x="52" y="0" width="1" height="1" fill="#59a8de"/><rect x="56" y="0" width="1" height="1" fill="#59a8de"/><rect x="60" y="0" width="1" height="1" fill="#59a8de"/><rect x="64" y="0" width="1" height="1" fill="#59a8de"/><rect x="68" y="0" width="1" height="1" fill="#59a8de"/><rect x="72" y="0" width="1" height="1" fill="#59a8de"/><rect x="76" y="0" width="1" height="1" fill="#59a8de"/><rect x="80" y="0" width="1" height="1" fill="#59a8de"/><rect x="84" y="0" width="1" height="1" fill="#59a8de"/><rect x="88" y="0" width="1" height="1" fill="#59a8de"/><rect x="92" y="0" width="1" height="1" fill="#59a8de"/><rect x="96" y="0" width="1" height="1" fill="#59a8de"/><rect x="100" y="0" width="1" height="1" fill="#59a8de"/><rect x="104" y="0" width="1" height="1" fill="#59a8de"/><rect x="108" y="0" width="1" height="1" fill="#59a8de"/><rect x="112" y="0" width="1" height="1" fill="#59a8de"/><rect x="116" y="0" width="1" height="1" fill="#59a8de"/><rect x="120" y="0" width="1" height="1" fill="#59a8de"/><rect x="124" y="0" width="1" height="1" fill="#59a8de"/><rect x="128" y="0" width="1" height="1" fill="#59a8de"/><rect x="132" y="0" width="1" height="1" fill="#59a8de"/><rect x="136" y="0" width="1" height="1" fill="#59a8de"/><rect x="140" y="0" width="1" height="1" fill="#59a8de"/><rect x="144" y="0" width="1" height="1" fill="#59a8de"/><rect x="148" y="0" width="1" height="1" fill="#59a8de"/><rect x="152" y="0" width="1" height="1" fill="#59a8de"/><rect x="156" y="0" width="1" height="1" fill="#59a8de"/><rect x="160" y="0" width="1" height="1" fill="#59a8de"/><rect x="164" y="0" width="1" height="1" fill="#59a8de"/><rect x="168" y="0" width="1" height="1" fill="#59a8de"/><rect x="172" y="0" width="1" height="1" fill="#59a8de"/><rect x="176" y="0" width="1" height="1" fill="#59a8de"/><rect x="180" y="0" width="1" height="1" fill="#59a8de"/><rect x="184" y="0" width="1" height="1" fill="#59a8de"/><rect x="188" y="0" width="1" height="1" fill="#59a8de"/><rect x="2" y="2" width="1" height="1" fill="#59a8de"/><rect x="6" y="2" width="1" height="1" fill="#59a8de"/><rect x="10" y="2" width="1" height="1" fill="#59a8de"/><rect x="14" y="2" width="1" height="1" fill="#59a8de"/><rect x="18" y="2" width="1" height="1" fill="#59a8de"/><rect x="22" y="2" width="1" height="1" fill="#59a8de"/><rect x="26" y="2" width="1" height="1" fill="#59a8de"/><rect x="30" y="2" width="1" height="1" fill="#59a8de"/><rect x="34" y="2" width="1" height="1" fill="#59a8de"/><rect x="38" y="2" width="1" height="1" fill="#59a8de"/><rect x="42" y="2" width="1" height="1" fill="#59a8de"/><rect x="46" y="2" width="1" height="1" fill="#59a8de"/><rect x="50" y="2" width="1" height="1" fill="#59a8de"/><rect x="54" y="2" width="1" height="1" fill="#59a8de"/><rect x="58" y="2" width="1" height="1" fill="#59a8de"/><rect x="62" y="2" width="1" height="1" fill="#59a8de"/><rect x="66" y="2" width="1" height="1" fill="#59a8de"/><rect x="70" y="2" width="1" height="1" fill="#59a8de"/><rect x="74" y="2" width="1" height="1" fill="#59a8de"/><rect x="78" y="2" width="1" height="1" fill="#59a8de"/><rect x="82" y="2" width="1" height="1" fill="#59a8de"/><rect x="86" y="2" width="1" height="1" fill="#59a8de"/><rect x="90" y="2" width="1" height="1" fill="#59a8de"/><rect x="94" y="2" width="1" height="1" fill="#59a8de"/><rect x="98" y="2" width="1" height="1" fill="#59a8de"/><rect x="102" y="2" width="1" height="1" fill="#59a8de"/><rect x="106" y="2" width="1" height="1" fill="#59a8de"/><rect x="110" y="2" width="1" height="1" fill="#59a8de"/><rect x="114" y="2" width="1" height="1" fill="#59a8de"/><rect x="118" y="2" width="1" height="1" fill="#59a8de"/><rect x="122" y="2" width="1" height="1" fill="#59a8de"/><rect x="126" y="2" width="1" height="1" fill="#59a8de"/><rect x="130" y="2" width="1" height="1" fill="#59a8de"/><rect x="134" y="2" width="1" height="1" fill="#59a8de"/><rect x="138" y="2" width="1" height="1" fill="#59a8de"/><rect x="142" y="2" width="1" height="1" fill="#59a8de"/><rect x="146" y="2" width="1" height="1" fill="#59a8de"/><rect x="150" y="2" width="1" height="1" fill="#59a8de"/><rect x="154" y="2" width="1" height="1" fill="#59a8de"/><rect x="158" y="2" width="1" height="1" fill="#59a8de"/><rect x="162" y="2" width="1" height="1" fill="#59a8de"/><rect x="166" y="2" width="1" height="1" fill="#59a8de"/><rect x="170" y="2" width="1" height="1" fill="#59a8de"/><rect x="174" y="2" width="1" height="1" fill="#59a8de"/><rect x="178" y="2" width="1" height="1" fill="#59a8de"/><rect x="182" y="2" width="1" height="1" fill="#59a8de"/><rect x="186" y="2" width="1" height="1" fill="#59a8de"/><rect x="0" y="4" width="1" height="1" fill="#59a8de"/><rect x="4" y="4" width="1" height="1" fill="#59a8de"/><rect x="8" y="4" width="1" height="1" fill="#59a8de"/><rect x="12" y="4" width="1" height="1" fill="#59a8de"/><rect x="16" y="4" width="1" height="1" fill="#59a8de"/><rect x="20" y="4" width="1" height="1" fill="#59a8de"/><rect x="24" y="4" width="1" height="1" fill="#59a8de"/><rect x="28" y="4" width="1" height="1" fill="#59a8de"/><rect x="32" y="4" width="1" height="1" fill="#59a8de"/><rect x="36" y="4" width="1" height="1" fill="#59a8de"/><rect x="40" y="4" width="1" height="1" fill="#59a8de"/><rect x="44" y="4" width="1" height="1" fill="#59a8de"/><rect x="48" y="4" width="1" height="1" fill="#59a8de"/><rect x="52" y="4" width="1" height="1" fill="#59a8de"/><rect x="56" y="4" width="1" height="1" fill="#59a8de"/><rect x="60" y="4" width="1" height="1" fill="#59a8de"/><rect x="64" y="4" width="1" height="1" fill="#59a8de"/><rect x="68" y="4" width="1" height="1" fill="#59a8de"/><rect x="72" y="4" width="1" height="1" fill="#59a8de"/><rect x="76" y="4" width="1" height="1" fill="#59a8de"/><rect x="80" y="4" width="1" height="1" fill="#59a8de"/><rect x="84" y="4" width="1" height="1" fill="#59a8de"/><rect x="88" y="4" width="1" height="1" fill="#59a8de"/><rect x="92" y="4" width="1" height="1" fill="#59a8de"/><rect x="96" y="4" width="1" height="1" fill="#59a8de"/><rect x="100" y="4" width="1" height="1" fill="#59a8de"/><rect x="104" y="4" width="1" height="1" fill="#59a8de"/><rect x="108" y="4" width="1" height="1" fill="#59a8de"/><rect x="112" y="4" width="1" height="1" fill="#59a8de"/><rect x="116" y="4" width="1" height="1" fill="#59a8de"/><rect x="120" y="4" width="1" height="1" fill="#59a8de"/><rect x="124" y="4" width="1" height="1" fill="#59a8de"/><rect x="128" y="4" width="1" height="1" fill="#59a8de"/><rect x="132" y="4" width="1" height="1" fill="#59a8de"/><rect x="136" y="4" width="1" height="1" fill="#59a8de"/><rect x="140" y="4" width="1" height="1" fill="#59a8de"/><rect x="144" y="4" width="1" height="1" fill="#59a8de"/><rect x="148" y="4" width="1" height="1" fill="#59a8de"/><rect x="152" y="4" width="1" height="1" fill="#59a8de"/><rect x="156" y="4" width="1" height="1" fill="#59a8de"/><rect x="160" y="4" width="1" height="1" fill="#59a8de"/><rect x="164" y="4" width="1" height="1" fill="#59a8de"/><rect x="168" y="4" width="1" height="1" fill="#59a8de"/><rect x="172" y="4" width="1" height="1" fill="#59a8de"/><rect x="176" y="4" width="1" height="1" fill="#59a8de"/><rect x="180" y="4" width="1" height="1" fill="#59a8de"/><rect x="184" y="4" width="1" height="1" fill="#59a8de"/><rect x="188" y="4" width="1" height="1" fill="#59a8de"/></svg>
<svg style="left:1286px;top:89.5px" width="8" height="4.2" viewBox="0 0 8 4.2"><path d="M0 0H8L4.0 4.2Z" fill="#ffffff"/></svg>
<svg style="left:1303px;top:86px" width="8" height="11" viewBox="0 0 8 11"><path d="M1.5 0.5 H6 V5.5 M1.5 0.5 V5.5 M0 5.8 H7.5 M3.75 6 V11 M5.2 0.5 V5.5" fill="none" stroke="#fff" stroke-width="1.1"/></svg>
<svg style="left:1318px;top:87px" width="10" height="9" viewBox="0 0 10 9"><path d="M0.6 0.5 L9.4 8.5 M9.4 0.5 L0.6 8.5" stroke="#fff" stroke-width="1.6"/></svg>
<svg style="left:997px;top:110px" width="12" height="12" viewBox="0 0 12 12"><circle cx="6" cy="6" r="6" fill="#555557"/><path d="M9.3 6 H3.4 M6 3.2 L3 6 L6 8.8" fill="none" stroke="#2d2d30" stroke-width="1.6"/></svg>
<svg style="left:1019px;top:110px" width="12" height="12" viewBox="0 0 12 12"><circle cx="6" cy="6" r="6" fill="#555557"/><path d="M2.7 6 H8.6 M6 3.2 L9 6 L6 8.8" fill="none" stroke="#2d2d30" stroke-width="1.6"/></svg>
<svg style="left:1040px;top:108.5px" width="15" height="15" viewBox="0 0 15 15"><path d="M0.8 7.8 L7.2 1.5 L13.6 7.8 M11 3.2 V0.8 M2.8 6.5 V13.5 H11.6 V6.5" fill="none" stroke="#c5c5c5" stroke-width="1.3"/><rect x="5.6" y="8.6" width="3.2" height="4.9" fill="#c5c5c5"/></svg>
<div class="a" style="left:1062px;top:106px;width:1px;height:20px;background:#464649;"></div>
<svg style="left:1072px;top:108.5px" width="14" height="15" viewBox="0 0 14 15"><path d="M0 0.8 H5.5 L2.75 3.8 Z" fill="#c5c5c5"/><path d="M2.75 3 V5.5" stroke="#c5c5c5" stroke-width="1"/><circle cx="8" cy="9" r="4.4" fill="none" stroke="#c5c5c5" stroke-width="1.7"/><path d="M8 6.6 V9.3 H10.2" fill="none" stroke="#c5c5c5" stroke-width="1.1"/></svg>
<svg style="left:1092px;top:114.5px" width="6" height="3.3" viewBox="0 0 6 3.3"><path d="M0 0H6L3.0 3.3Z" fill="#999"/></svg>
<svg style="left:1105.5px;top:110.5px" width="13" height="11.5" viewBox="0 0 13 11.5"><path d="M2 3 H11.5 M8.6 0.4 L11.6 3 L8.6 5.6 M11 8.5 H1.5 M4.4 5.9 L1.4 8.5 L4.4 11.1" fill="none" stroke="#c5c5c5" stroke-width="1.6"/></svg>
<svg style="left:1127.5px;top:110px" width="13" height="12.5" viewBox="0 0 13 12.5"><path d="M2 7.8 A4.3 4.3 0 0 1 7.6 2.2" fill="none" stroke="#dadada" stroke-width="2.6"/><path d="M6.2 -0.4 L11.6 1.6 L8 6 Z" fill="#dadada"/><path d="M11 4.7 A4.3 4.3 0 0 1 5.4 10.3" fill="none" stroke="#dadada" stroke-width="2.6"/><path d="M6.8 12.9 L1.4 10.9 L5 6.5 Z" fill="#dadada"/></svg>
<svg style="left:1149.5px;top:109.5px" width="14" height="13" viewBox="0 0 14 13"><path d="M4.5 2.8 V0.6 H13.4 V7.6 H11.5 M2.5 4.8 V2.8 H11.4 V9.8 H9.5" fill="none" stroke="#c5c5c5" stroke-width="1.1"/><rect x="0.6" y="5" width="8.6" height="7.4" fill="none" stroke="#c5c5c5" stroke-width="1.2"/><rect x="2.6" y="8" width="4.6" height="1.6" fill="#4da6ff"/></svg>
<svg style="left:1171px;top:109px" width="14" height="14" viewBox="0 0 14 14"><path d="M0.5 8.5 V0.5 H6.5" fill="none" stroke="#c5c5c5" stroke-width="1" stroke-dasharray="1 1"/><path d="M3 10.5 V2.5 H8 L9.8 4.3" fill="none" stroke="#c5c5c5" stroke-width="1"/><path d="M5.5 4.5 H10.5 L13.4 7.4 V13.5 H5.5 Z" fill="#2d2d30" stroke="#c5c5c5" stroke-width="1.1"/><path d="M7.3 8 H11.5 M7.3 9.8 H11.5 M7.3 11.6 H11.5" stroke="#c5c5c5" stroke-width="0.9"/></svg>
<div class="a" style="left:1193px;top:106px;width:1px;height:20px;background:#464649;"></div>
<svg style="left:1202px;top:109.5px" width="13" height="13" viewBox="0 0 13 13"><path d="M1.6 11.4 L6.8 6.2" stroke="#dadada" stroke-width="3.2" stroke-linecap="round"/><circle cx="8.4" cy="4.6" r="3.9" fill="#dadada"/><path d="M8.6 4.4 L12.6 0.4" stroke="#2d2d30" stroke-width="2.6"/></svg>
<div class="a" style="left:1219px;top:104px;width:22px;height:24px;background:#2d2d30;border:1.3px solid #3399ff"></div>
<svg style="left:1223px;top:114px" width="14" height="4" viewBox="0 0 14 4"><rect x="6" y="0" width="8" height="4" fill="#dadada"/><rect x="0" y="2.8" width="14" height="1.2" fill="#dadada"/></svg>
<div class="a" style="left:988px;top:130px;width:346.5px;height:21px;background:#333337;border-top:1px solid #3f3f46;border-bottom:1px solid #3f3f46"></div>
<div class="a" style="left:1321.5px;top:130.5px;width:13px;height:20px;background:#3f3f46;"></div>
<div class="t" style="left:992.5px;top:132.5px;color:#999999;font-size:12.3px;font-weight:normal;transform:scaleX(0.9467);transform-origin:0 50%;">Search Solution Explorer (Ctrl+ş)</div>
<svg style="left:1306px;top:134px" width="13" height="13" viewBox="0 0 13 13"><circle cx="8.3" cy="4.5" r="3.4" fill="none" stroke="#f1f1f1" stroke-width="1.8"/><path d="M5.6 7.1 L1.2 11.6" stroke="#f1f1f1" stroke-width="2.3" stroke-linecap="round"/></svg>
<svg style="left:1324.5px;top:139px" width="6" height="3.3" viewBox="0 0 6 3.3"><path d="M0 0H6L3.0 3.3Z" fill="#f1f1f1"/></svg>
<div class="a" style="left:988px;top:153px;width:346.5px;height:505.5px;background:#252526;"></div>
<div class="a" style="left:988px;top:173px;width:329px;height:18.8px;background:#3399ff;"></div>
<svg style="left:1001px;top:158px" width="14.5" height="14" viewBox="0 0 14.5 14"><rect x="0" y="0" width="14.2" height="2.6" fill="#c8c8c8"/><path d="M0.6 2 V6.2 M13.6 2 V11.6 H9.4" fill="none" stroke="#c8c8c8" stroke-width="1.2"/><path d="M6.4 5.6 L8.4 6.4 V13.2 L6.4 14 L3 10.8 L1.4 12.1 L0.2 11.6 V8 L1.4 7.5 L3 8.8 Z M6.4 8.2 L4.4 9.8 L6.4 11.4 Z M1.4 9 V10.6 L2.2 9.8 Z" fill="#c8c8c8" fill-rule="evenodd"/></svg>
<div class="t" style="left:1021.2px;top:156.5px;color:#f1f1f1;font-size:12.3px;font-weight:normal;transform:scaleX(0.9775);transform-origin:0 50%;">Solution 'MvcProjesi' (1 project)</div>
<svg style="left:1004px;top:179px" width="7" height="7" viewBox="0 0 7 7"><path d="M6.5 0.5 V6.5 H0.5 Z" fill="#fff"/></svg>
<div class="a" style="left:1018px;top:176px;width:16px;height:14px;background:#1e2a38;"></div>
<div class="t" style="left:1039px;top:174.5px;color:#ffffff;font-size:12.3px;font-weight:bold;transform:scaleX(0.9394);transform-origin:0 50%;">MvcProjesi</div>
<svg style="left:1023px;top:196.5px" width="6" height="9" viewBox="0 0 6 9"><path d="M0.7 0.7 L4.6 4.3 L0.7 7.9 Z" fill="none" stroke="#f1f1f1" stroke-width="1"/></svg>
<svg style="left:1038px;top:194.0px" width="13" height="13" viewBox="0 0 13 13"><path d="M1.6 11.4 L6.8 6.2" stroke="#c5c5c5" stroke-width="3.2" stroke-linecap="round"/><circle cx="8.4" cy="4.6" r="3.9" fill="#c5c5c5"/><path d="M8.6 4.4 L12.6 0.4" stroke="#252526" stroke-width="2.6"/></svg>
<div class="t" style="left:1058px;top:192.5px;width:25px;overflow:hidden;font-size:12.3px"><span>Prop</span></div>
<div class="t" style="left:1083px;top:192.5px;color:#f1f1f1;font-size:12.3px;font-weight:normal;transform:scaleX(0.8977);transform-origin:0 50%;">erties</div>
<svg style="left:1023px;top:214.5px" width="6" height="9" viewBox="0 0 6 9"><path d="M0.7 0.7 L4.6 4.3 L0.7 7.9 Z" fill="none" stroke="#f1f1f1" stroke-width="1"/></svg>
<svg style="left:1037px;top:213.5px" width="16" height="10" viewBox="0 0 16 10"><rect x="0.5" y="2.5" width="4" height="5" fill="#c5c5c5"/><path d="M5 5 H10" stroke="#c5c5c5"/><rect x="10.5" y="0.5" width="5" height="9" fill="none" stroke="#c5c5c5"/></svg>
<div class="t" style="left:1058px;top:210.5px;width:25px;overflow:hidden;font-size:12.3px"><span>Refe</span></div>
<div class="t" style="left:1083px;top:210.5px;color:#f1f1f1;font-size:12.3px;font-weight:normal;transform:scaleX(0.8396);transform-origin:0 50%;">rences</div>
<svg style="left:1037px;top:229.5px" width="16" height="14" viewBox="0 0 16 14"><path d="M0.5 2 H6 L7.2 3.5 H15 V12.5 H0.5 Z" fill="#dcb67a"/></svg>
<div class="t" style="left:1058px;top:228.5px;width:24.5px;overflow:hidden;font-size:12.3px"><span>App</span></div>
<div class="t" style="left:1082.5px;top:228.5px;color:#f1f1f1;font-size:12.3px;font-weight:normal;transform:scaleX(0.7646);transform-origin:0 50%;">_Data</div>
<svg style="left:1023px;top:250.5px" width="6" height="9" viewBox="0 0 6 9"><path d="M0.7 0.7 L4.6 4.3 L0.7 7.9 Z" fill="none" stroke="#f1f1f1" stroke-width="1"/></svg>
<svg style="left:1037px;top:247.5px" width="16" height="14" viewBox="0 0 16 14"><path d="M0.5 2 H6 L7.2 3.5 H15 V12.5 H0.5 Z" fill="#dcb67a"/></svg>
<div class="t" style="left:1058px;top:246.5px;width:24.5px;overflow:hidden;font-size:12.3px"><span>App</span></div>
<div class="t" style="left:1082.5px;top:246.5px;color:#f1f1f1;font-size:12.3px;font-weight:normal;transform:scaleX(0.7863);transform-origin:0 50%;">_Start</div>
<svg style="left:1023px;top:268.5px" width="6" height="9" viewBox="0 0 6 9"><path d="M0.7 0.7 L4.6 4.3 L0.7 7.9 Z" fill="none" stroke="#f1f1f1" stroke-width="1"/></svg>
<svg style="left:1037px;top:265.5px" width="16" height="14" viewBox="0 0 16 14"><path d="M0.5 2 H6 L7.2 3.5 H15 V12.5 H0.5 Z" fill="#dcb67a"/></svg>
<div class="t" style="left:1058px;top:264.5px;width:25px;overflow:hidden;font-size:12.3px"><span>Cont</span></div>
<div class="t" style="left:1083px;top:264.5px;color:#f1f1f1;font-size:12.3px;font-weight:normal;transform:scaleX(0.9936);transform-origin:0 50%;">ent</div>
<svg style="left:1023px;top:287.0px" width="7" height="7" viewBox="0 0 7 7"><path d="M6.5 0.5 V6.5 H0.5 Z" fill="#f1f1f1"/></svg>
<svg style="left:1037px;top:283.5px" width="16" height="14" viewBox="0 0 16 14"><path d="M0.5 2 H6 L7.2 3.5 H15 V12.5 H0.5 Z" fill="#dcb67a"/></svg>
<div class="t" style="left:1058px;top:282.5px;width:25px;overflow:hidden;font-size:12.3px"><span>Cont</span></div>
<div class="t" style="left:1083px;top:282.5px;color:#f1f1f1;font-size:12.3px;font-weight:normal;transform:scaleX(0.9557);transform-origin:0 50%;">rollers</div>
<svg style="left:1042px;top:304.5px" width="6" height="9" viewBox="0 0 6 9"><path d="M0.7 0.7 L4.6 4.3 L0.7 7.9 Z" fill="none" stroke="#f1f1f1" stroke-width="1"/></svg>
<svg style="left:1056px;top:301.5px" width="16" height="14" viewBox="0 0 16 14"><path d="M3 0.5 H10 L13 3.5 V13.5 H3 Z" fill="none" stroke="#c5c5c5" stroke-width="1"/><path d="M9.5 8.5 A2.3 2.3 0 1 0 9.5 11.5" fill="none" stroke="#3c9b4a" stroke-width="1.3"/></svg>
<div class="t" style="left:1077px;top:300.5px;width:6px;overflow:hidden;font-size:12.3px"><span>H</span></div>
<div class="t" style="left:1083px;top:300.5px;color:#f1f1f1;font-size:12.3px;font-weight:normal;transform:scaleX(0.9971);transform-origin:0 50%;">omeController.cs</div>
<svg style="left:1042px;top:322.5px" width="6" height="9" viewBox="0 0 6 9"><path d="M0.7 0.7 L4.6 4.3 L0.7 7.9 Z" fill="none" stroke="#f1f1f1" stroke-width="1"/></svg>
<svg style="left:1056px;top:319.5px" width="16" height="14" viewBox="0 0 16 14"><path d="M3 0.5 H10 L13 3.5 V13.5 H3 Z" fill="none" stroke="#c5c5c5" stroke-width="1"/><path d="M9.5 8.5 A2.3 2.3 0 1 0 9.5 11.5" fill="none" stroke="#3c9b4a" stroke-width="1.3"/></svg>
<div class="t" style="left:1077px;top:318.5px;width:6px;overflow:hidden;font-size:12.3px"><span>U</span></div>
<div class="t" style="left:1083px;top:318.5px;color:#f1f1f1;font-size:12.3px;font-weight:normal;transform:scaleX(0.9790);transform-origin:0 50%;">yelikController.cs</div>
<svg style="left:1023px;top:340.5px" width="6" height="9" viewBox="0 0 6 9"><path d="M0.7 0.7 L4.6 4.3 L0.7 7.9 Z" fill="none" stroke="#f1f1f1" stroke-width="1"/></svg>
<svg style="left:1037px;top:337.5px" width="16" height="14" viewBox="0 0 16 14"><path d="M0.5 2 H6 L7.2 3.5 H15 V12.5 H0.5 Z" fill="#dcb67a"/></svg>
<div class="t" style="left:1058px;top:336.5px;width:22px;overflow:hidden;font-size:12.3px"><span>Dal</span></div>
<svg style="left:1023px;top:358.5px" width="6" height="9" viewBox="0 0 6 9"><path d="M0.7 0.7 L4.6 4.3 L0.7 7.9 Z" fill="none" stroke="#f1f1f1" stroke-width="1"/></svg>
<svg style="left:1037px;top:355.5px" width="16" height="14" viewBox="0 0 16 14"><path d="M0.5 2 H6 L7.2 3.5 H15 V12.5 H0.5 Z" fill="#dcb67a"/></svg>
<div class="t" style="left:1058px;top:354.5px;width:24px;overflow:hidden;font-size:12.3px"><span>font</span></div>
<div class="t" style="left:1082px;top:354.5px;color:#f1f1f1;font-size:12.3px;font-weight:normal;transform:scaleX(0.4061);transform-origin:0 50%;">s</div>
<svg style="left:1023px;top:376.5px" width="6" height="9" viewBox="0 0 6 9"><path d="M0.7 0.7 L4.6 4.3 L0.7 7.9 Z" fill="none" stroke="#f1f1f1" stroke-width="1"/></svg>
<svg style="left:1037px;top:373.5px" width="16" height="14" viewBox="0 0 16 14"><path d="M0.5 2 H6 L7.2 3.5 H15 V12.5 H0.5 Z" fill="#dcb67a"/></svg>
<div class="t" style="left:1058px;top:372.5px;width:25px;overflow:hidden;font-size:12.3px"><span>Imag</span></div>
<div class="t" style="left:1083px;top:372.5px;color:#f1f1f1;font-size:12.3px;font-weight:normal;transform:scaleX(0.9385);transform-origin:0 50%;">es</div>
<svg style="left:1023px;top:394.5px" width="6" height="9" viewBox="0 0 6 9"><path d="M0.7 0.7 L4.6 4.3 L0.7 7.9 Z" fill="none" stroke="#f1f1f1" stroke-width="1"/></svg>
<svg style="left:1037px;top:391.5px" width="16" height="14" viewBox="0 0 16 14"><path d="M0.5 2 H6 L7.2 3.5 H15 V12.5 H0.5 Z" fill="#dcb67a"/></svg>
<div class="t" style="left:1058px;top:390.5px;width:25px;overflow:hidden;font-size:12.3px"><span>Mod</span></div>
<div class="t" style="left:1083px;top:390.5px;color:#f1f1f1;font-size:12.3px;font-weight:normal;transform:scaleX(0.8262);transform-origin:0 50%;">els</div>
<svg style="left:1023px;top:413.0px" width="7" height="7" viewBox="0 0 7 7"><path d="M6.5 0.5 V6.5 H0.5 Z" fill="#f1f1f1"/></svg>
<svg style="left:1037px;top:409.5px" width="16" height="14" viewBox="0 0 16 14"><path d="M0.5 2 H6 L7.2 3.5 H15 V12.5 H0.5 Z" fill="#dcb67a"/></svg>
<div class="t" style="left:1058px;top:408.5px;width:25px;overflow:hidden;font-size:12.3px"><span>Scrip</span></div>
<div class="t" style="left:1083px;top:408.5px;color:#f1f1f1;font-size:12.3px;font-weight:normal;transform:scaleX(0.9396);transform-origin:0 50%;">ts</div>
<svg style="left:1056px;top:427.5px" width="16" height="14" viewBox="0 0 16 14"><path d="M3 0.5 H10 L13 3.5 V13.5 H3 Z" fill="none" stroke="#c5c5c5" stroke-width="1"/><path d="M6 6 V10 Q6 11.5 4.6 11.2 M10.6 6.4 Q8 5.6 8.4 7.6 Q9 8.8 10.2 9.4 Q11 11 8.2 10.8" fill="none" stroke="#e8c36a" stroke-width="1"/></svg>
<div class="t" style="left:1077px;top:426.5px;width:8.5px;overflow:hidden;font-size:12.3px"><span>_r</span></div>
<div class="t" style="left:1085.5px;top:426.5px;color:#f1f1f1;font-size:12.3px;font-weight:normal;transform:scaleX(0.8973);transform-origin:0 50%;">eferences.js</div>
<svg style="left:1056px;top:445.5px" width="16" height="14" viewBox="0 0 16 14"><path d="M3 0.5 H10 L13 3.5 V13.5 H3 Z" fill="none" stroke="#c5c5c5" stroke-width="1"/><path d="M6 6 V10 Q6 11.5 4.6 11.2 M10.6 6.4 Q8 5.6 8.4 7.6 Q9 8.8 10.2 9.4 Q11 11 8.2 10.8" fill="none" stroke="#e8c36a" stroke-width="1"/></svg>
<div class="t" style="left:1077px;top:444.5px;width:6px;overflow:hidden;font-size:12.3px"><span>b</span></div>
<div class="t" style="left:1083px;top:444.5px;color:#f1f1f1;font-size:12.3px;font-weight:normal;transform:scaleX(0.9536);transform-origin:0 50%;">ootstrap.js</div>
<svg style="left:1056px;top:463.5px" width="16" height="14" viewBox="0 0 16 14"><path d="M3 0.5 H10 L13 3.5 V13.5 H3 Z" fill="none" stroke="#c5c5c5" stroke-width="1"/><path d="M6 6 V10 Q6 11.5 4.6 11.2 M10.6 6.4 Q8 5.6 8.4 7.6 Q9 8.8 10.2 9.4 Q11 11 8.2 10.8" fill="none" stroke="#e8c36a" stroke-width="1"/></svg>
<div class="t" style="left:1077px;top:462.5px;width:6px;overflow:hidden;font-size:12.3px"><span>b</span></div>
<div class="t" style="left:1083px;top:462.5px;color:#f1f1f1;font-size:12.3px;font-weight:normal;transform:scaleX(0.9729);transform-origin:0 50%;">ootstrap.min.js</div>
<svg style="left:1056px;top:481.5px" width="16" height="14" viewBox="0 0 16 14"><path d="M3 0.5 H10 L13 3.5 V13.5 H3 Z" fill="none" stroke="#c5c5c5" stroke-width="1"/><path d="M6 6 V10 Q6 11.5 4.6 11.2 M10.6 6.4 Q8 5.6 8.4 7.6 Q9 8.8 10.2 9.4 Q11 11 8.2 10.8" fill="none" stroke="#e8c36a" stroke-width="1"/></svg>
<div class="t" style="left:1077px;top:480.5px;width:9.400000000000091px;overflow:hidden;font-size:12.3px"><span>jq</span></div>
<div class="t" style="left:1086.4px;top:480.5px;color:#f1f1f1;font-size:12.3px;font-weight:normal;transform:scaleX(0.9253);transform-origin:0 50%;">uery-1.10.2.intellisense.js</div>
<svg style="left:1056px;top:499.5px" width="16" height="14" viewBox="0 0 16 14"><path d="M3 0.5 H10 L13 3.5 V13.5 H3 Z" fill="none" stroke="#c5c5c5" stroke-width="1"/><path d="M6 6 V10 Q6 11.5 4.6 11.2 M10.6 6.4 Q8 5.6 8.4 7.6 Q9 8.8 10.2 9.4 Q11 11 8.2 10.8" fill="none" stroke="#e8c36a" stroke-width="1"/></svg>
<div class="t" style="left:1077px;top:498.5px;width:9.400000000000091px;overflow:hidden;font-size:12.3px"><span>jq</span></div>
<div class="t" style="left:1086.4px;top:498.5px;color:#f1f1f1;font-size:12.3px;font-weight:normal;transform:scaleX(0.9072);transform-origin:0 50%;">uery-1.10.2.js</div>
<svg style="left:1056px;top:517.5px" width="16" height="14" viewBox="0 0 16 14"><path d="M3 0.5 H10 L13 3.5 V13.5 H3 Z" fill="none" stroke="#c5c5c5" stroke-width="1"/><path d="M6 6 V10 Q6 11.5 4.6 11.2 M10.6 6.4 Q8 5.6 8.4 7.6 Q9 8.8 10.2 9.4 Q11 11 8.2 10.8" fill="none" stroke="#e8c36a" stroke-width="1"/></svg>
<div class="t" style="left:1077px;top:516.5px;width:9.400000000000091px;overflow:hidden;font-size:12.3px"><span>jq</span></div>
<div class="t" style="left:1086.4px;top:516.5px;color:#f1f1f1;font-size:12.3px;font-weight:normal;transform:scaleX(0.9372);transform-origin:0 50%;">uery-1.10.2.min.js</div>
<svg style="left:1056px;top:535.5px" width="16" height="14" viewBox="0 0 16 14"><path d="M3 0.5 H10 L13 3.5 V13.5 H3 Z" fill="none" stroke="#c5c5c5" stroke-width="1"/><path d="M6 6 V10 Q6 11.5 4.6 11.2 M10.6 6.4 Q8 5.6 8.4 7.6 Q9 8.8 10.2 9.4 Q11 11 8.2 10.8" fill="none" stroke="#e8c36a" stroke-width="1"/></svg>
<div class="t" style="left:1077px;top:534.5px;width:9.400000000000091px;overflow:hidden;font-size:12.3px"><span>jq</span></div>
<div class="t" style="left:1086.4px;top:534.5px;color:#f1f1f1;font-size:12.3px;font-weight:normal;transform:scaleX(0.9505);transform-origin:0 50%;">uery-1.10.2.min.map</div>
<svg style="left:1056px;top:553.5px" width="16" height="14" viewBox="0 0 16 14"><path d="M3 0.5 H10 L13 3.5 V13.5 H3 Z" fill="none" stroke="#c5c5c5" stroke-width="1"/><path d="M6 6 V10 Q6 11.5 4.6 11.2 M10.6 6.4 Q8 5.6 8.4 7.6 Q9 8.8 10.2 9.4 Q11 11 8.2 10.8" fill="none" stroke="#e8c36a" stroke-width="1"/></svg>
<div class="t" style="left:1077px;top:552.5px;width:9.400000000000091px;overflow:hidden;font-size:12.3px"><span>jq</span></div>
<div class="t" style="left:1086.4px;top:552.5px;color:#f1f1f1;font-size:12.3px;font-weight:normal;transform:scaleX(0.9624);transform-origin:0 50%;">uery.unobtrusive-ajax.js</div>
<svg style="left:1056px;top:571.5px" width="16" height="14" viewBox="0 0 16 14"><path d="M3 0.5 H10 L13 3.5 V13.5 H3 Z" fill="none" stroke="#c5c5c5" stroke-width="1"/><path d="M6 6 V10 Q6 11.5 4.6 11.2 M10.6 6.4 Q8 5.6 8.4 7.6 Q9 8.8 10.2 9.4 Q11 11 8.2 10.8" fill="none" stroke="#e8c36a" stroke-width="1"/></svg>
<div class="t" style="left:1077px;top:570.5px;width:9.400000000000091px;overflow:hidden;font-size:12.3px"><span>jq</span></div>
<div class="t" style="left:1086.4px;top:570.5px;color:#f1f1f1;font-size:12.3px;font-weight:normal;transform:scaleX(0.9718);transform-origin:0 50%;">uery.unobtrusive-ajax.min.js</div>
<svg style="left:1056px;top:589.5px" width="16" height="14" viewBox="0 0 16 14"><path d="M3 0.5 H10 L13 3.5 V13.5 H3 Z" fill="none" stroke="#c5c5c5" stroke-width="1"/><path d="M6 6 V10 Q6 11.5 4.6 11.2 M10.6 6.4 Q8 5.6 8.4 7.6 Q9 8.8 10.2 9.4 Q11 11 8.2 10.8" fill="none" stroke="#e8c36a" stroke-width="1"/></svg>
<div class="t" style="left:1077px;top:588.5px;width:9.400000000000091px;overflow:hidden;font-size:12.3px"><span>jq</span></div>
<div class="t" style="left:1086.4px;top:588.5px;color:#f1f1f1;font-size:12.3px;font-weight:normal;transform:scaleX(0.9640);transform-origin:0 50%;">uery.validate-vsdoc.js</div>
<svg style="left:1056px;top:607.5px" width="16" height="14" viewBox="0 0 16 14"><path d="M3 0.5 H10 L13 3.5 V13.5 H3 Z" fill="none" stroke="#c5c5c5" stroke-width="1"/><path d="M6 6 V10 Q6 11.5 4.6 11.2 M10.6 6.4 Q8 5.6 8.4 7.6 Q9 8.8 10.2 9.4 Q11 11 8.2 10.8" fill="none" stroke="#e8c36a" stroke-width="1"/></svg>
<div class="t" style="left:1077px;top:606.5px;width:9.400000000000091px;overflow:hidden;font-size:12.3px"><span>jq</span></div>
<div class="t" style="left:1086.4px;top:606.5px;color:#f1f1f1;font-size:12.3px;font-weight:normal;transform:scaleX(0.9444);transform-origin:0 50%;">uery.validate.js</div>
<svg style="left:1056px;top:625.5px" width="16" height="14" viewBox="0 0 16 14"><path d="M3 0.5 H10 L13 3.5 V13.5 H3 Z" fill="none" stroke="#c5c5c5" stroke-width="1"/><path d="M6 6 V10 Q6 11.5 4.6 11.2 M10.6 6.4 Q8 5.6 8.4 7.6 Q9 8.8 10.2 9.4 Q11 11 8.2 10.8" fill="none" stroke="#e8c36a" stroke-width="1"/></svg>
<div class="t" style="left:1077px;top:624.5px;width:9.400000000000091px;overflow:hidden;font-size:12.3px"><span>jq</span></div>
<div class="t" style="left:1086.4px;top:624.5px;color:#f1f1f1;font-size:12.3px;font-weight:normal;transform:scaleX(0.9670);transform-origin:0 50%;">uery.validate.min.js</div>
<svg style="left:1056px;top:643.5px" width="16" height="14" viewBox="0 0 16 14"><path d="M3 0.5 H10 L13 3.5 V13.5 H3 Z" fill="none" stroke="#c5c5c5" stroke-width="1"/><path d="M6 6 V10 Q6 11.5 4.6 11.2 M10.6 6.4 Q8 5.6 8.4 7.6 Q9 8.8 10.2 9.4 Q11 11 8.2 10.8" fill="none" stroke="#e8c36a" stroke-width="1"/></svg>
<div class="t" style="left:1077px;top:642.5px;width:9.400000000000091px;overflow:hidden;font-size:12.3px"><span>jq</span></div>
<div class="t" style="left:1086.4px;top:642.5px;color:#f1f1f1;font-size:12.3px;font-weight:normal;transform:scaleX(0.9696);transform-origin:0 50%;">uery.validate.unobtrusive.js</div>
<div class="a" style="left:1317px;top:153px;width:17.5px;height:505.5px;background:#3e3e42;"></div>
<svg style="left:1321px;top:161px" width="9" height="5" viewBox="0 0 9 5"><path d="M0 5 L4.5 0 L9 5 Z" fill="#999"/></svg>
<svg style="left:1321px;top:646px" width="9" height="5" viewBox="0 0 9 5"><path d="M0 0 L4.5 5 L9 0 Z" fill="#999"/></svg>
<div class="a" style="left:1321.3px;top:172px;width:9px;height:269px;background:#686868;"></div>
<div class="a" style="left:1087.5px;top:658px;width:247px;height:1px;background:#3f3f46;"></div>
<div class="a" style="left:987px;top:658px;width:100.5px;height:20.5px;background:#252526;border:1px solid #3f3f46;border-top:none"></div>
<div class="t" style="left:991px;top:660.4px;color:#0097fb;font-size:12.3px;font-weight:normal;transform:scaleX(0.9716);transform-origin:0 50%;">Solution Explorer</div>
<div class="t" style="left:1093.2px;top:660.6px;color:#d0d0d0;font-size:12.3px;font-weight:normal;transform:scaleX(0.9421);transform-origin:0 50%;">Properties</div>
<!-- p50_ctxmenu -->
<div class="a" style="left:791px;top:177px;width:292px;height:495px;background:#1b1b1c;border:1px solid #333337;box-shadow:1px 1px 2px rgba(0,0,0,0.3)"></div>
<div class="a" style="left:794px;top:409px;width:286px;height:22px;background:#333334;"></div>
<div class="t" style="left:828px;top:183.5px;color:#f1f1f1;font-size:12.3px;font-weight:normal;transform:scaleX(0.9796);transform-origin:0 50%;">Build</div>
<div class="t" style="left:828px;top:205.5px;color:#f1f1f1;font-size:12.3px;font-weight:normal;transform:scaleX(0.9472);transform-origin:0 50%;">Rebuild</div>
<div class="t" style="left:828px;top:227.5px;color:#f1f1f1;font-size:12.3px;font-weight:normal;transform:scaleX(0.9334);transform-origin:0 50%;">Clean</div>
<div class="t" style="left:828px;top:249.5px;color:#f1f1f1;font-size:12.3px;font-weight:normal;transform:scaleX(0.9456);transform-origin:0 50%;">View</div>
<svg style="left:1066.8px;top:253.7px" width="4.5" height="7.5" viewBox="0 0 4.5 7.5"><path d="M0 0 L4.4 3.75 L0 7.5 Z" fill="#999"/></svg>
<div class="t" style="left:828px;top:271.5px;color:#f1f1f1;font-size:12.3px;font-weight:normal;transform:scaleX(0.9371);transform-origin:0 50%;">Analyze</div>
<svg style="left:1066.8px;top:275.7px" width="4.5" height="7.5" viewBox="0 0 4.5 7.5"><path d="M0 0 L4.4 3.75 L0 7.5 Z" fill="#999"/></svg>
<div class="t" style="left:828px;top:293.5px;color:#f1f1f1;font-size:12.3px;font-weight:normal;transform:scaleX(0.9389);transform-origin:0 50%;">Publish...</div>
<div class="t" style="left:828px;top:318.5px;color:#f1f1f1;font-size:12.3px;font-weight:normal;transform:scaleX(0.9109);transform-origin:0 50%;">Web Essentials</div>
<svg style="left:1066.8px;top:322.7px" width="4.5" height="7.5" viewBox="0 0 4.5 7.5"><path d="M0 0 L4.4 3.75 L0 7.5 Z" fill="#999"/></svg>
<div class="t" style="left:828px;top:343.5px;color:#f1f1f1;font-size:12.3px;font-weight:normal;transform:scaleX(0.9471);transform-origin:0 50%;">Scope to This</div>
<div class="t" style="left:828px;top:365.5px;color:#f1f1f1;font-size:12.3px;font-weight:normal;transform:scaleX(0.9504);transform-origin:0 50%;">New Solution Explorer View</div>
<div class="t" style="left:828px;top:390.5px;color:#f1f1f1;font-size:12.3px;font-weight:normal;transform:scaleX(1.0050);transform-origin:0 50%;">Add</div>
<svg style="left:1066.8px;top:394.7px" width="4.5" height="7.5" viewBox="0 0 4.5 7.5"><path d="M0 0 L4.4 3.75 L0 7.5 Z" fill="#999"/></svg>
<div class="t" style="left:828px;top:412.5px;color:#f1f1f1;font-size:12.3px;font-weight:normal;transform:scaleX(0.9333);transform-origin:0 50%;">Manage NuGet Packages...</div>
<div class="t" style="left:828px;top:437.5px;color:#f1f1f1;font-size:12.3px;font-weight:normal;transform:scaleX(0.9206);transform-origin:0 50%;">Set as StartUp Project</div>
<div class="t" style="left:828px;top:459.5px;color:#f1f1f1;font-size:12.3px;font-weight:normal;transform:scaleX(0.9655);transform-origin:0 50%;">Debug</div>
<svg style="left:1066.8px;top:463.7px" width="4.5" height="7.5" viewBox="0 0 4.5 7.5"><path d="M0 0 L4.4 3.75 L0 7.5 Z" fill="#999"/></svg>
<div class="t" style="left:828px;top:484.5px;color:#f1f1f1;font-size:12.3px;font-weight:normal;transform:scaleX(0.9630);transform-origin:0 50%;">Source Control</div>
<svg style="left:1066.8px;top:488.7px" width="4.5" height="7.5" viewBox="0 0 4.5 7.5"><path d="M0 0 L4.4 3.75 L0 7.5 Z" fill="#999"/></svg>
<div class="t" style="left:828px;top:509.5px;color:#f1f1f1;font-size:12.3px;font-weight:normal;transform:scaleX(0.9927);transform-origin:0 50%;">Cut</div>
<div class="t" style="left:1011px;top:509.5px;color:#f1f1f1;font-size:12.3px;font-weight:normal;transform:scaleX(0.9851);transform-origin:0 50%;">Ctrl+X</div>
<div class="t" style="left:828px;top:531.5px;color:#656565;font-size:12.3px;font-weight:normal;transform:scaleX(0.8902);transform-origin:0 50%;">Paste</div>
<div class="t" style="left:1011px;top:531.5px;color:#656565;font-size:12.3px;font-weight:normal;transform:scaleX(0.9851);transform-origin:0 50%;">Ctrl+V</div>
<div class="t" style="left:828px;top:553.5px;color:#f1f1f1;font-size:12.3px;font-weight:normal;transform:scaleX(0.9389);transform-origin:0 50%;">Remove</div>
<div class="t" style="left:1011px;top:553.5px;color:#f1f1f1;font-size:12.3px;font-weight:normal;transform:scaleX(0.9213);transform-origin:0 50%;">Del</div>
<div class="t" style="left:828px;top:575.5px;color:#f1f1f1;font-size:12.3px;font-weight:normal;transform:scaleX(0.9250);transform-origin:0 50%;">Rename</div>
<div class="t" style="left:828px;top:600.5px;color:#f1f1f1;font-size:12.3px;font-weight:normal;transform:scaleX(0.9669);transform-origin:0 50%;">Unload Project</div>
<div class="t" style="left:828px;top:625.5px;color:#f1f1f1;font-size:12.3px;font-weight:normal;transform:scaleX(0.9364);transform-origin:0 50%;">Open Folder in File Explorer</div>
<div class="t" style="left:828px;top:650.5px;color:#f1f1f1;font-size:12.3px;font-weight:normal;transform:scaleX(0.9456);transform-origin:0 50%;">Properties</div>
<div class="t" style="left:1011px;top:650.5px;color:#f1f1f1;font-size:12.3px;font-weight:normal;transform:scaleX(0.9816);transform-origin:0 50%;">Alt+Enter</div>
<div class="a" style="left:824.5px;top:313px;width:257px;height:1px;background:#333337;"></div>
<div class="a" style="left:824.5px;top:338px;width:257px;height:1px;background:#333337;"></div>
<div class="a" style="left:824.5px;top:385px;width:257px;height:1px;background:#333337;"></div>
<div class="a" style="left:824.5px;top:432px;width:257px;height:1px;background:#333337;"></div>
<div class="a" style="left:824.5px;top:479px;width:257px;height:1px;background:#333337;"></div>
<div class="a" style="left:824.5px;top:504px;width:257px;height:1px;background:#333337;"></div>
<div class="a" style="left:824.5px;top:595px;width:257px;height:1px;background:#333337;"></div>
<div class="a" style="left:824.5px;top:620px;width:257px;height:1px;background:#333337;"></div>
<div class="a" style="left:824.5px;top:645px;width:257px;height:1px;background:#333337;"></div>
<svg style="left:800px;top:183.5px" width="15" height="14.5" viewBox="0 0 15 14.5"><path d="M7.5 0 V4.5 M4.8 2.8 L7.5 5.6 L10.2 2.8" fill="none" stroke="#c5c5c5" stroke-width="1.7"/><path d="M0 14.5 V6.5 H2.2 V8.5 H4 V6.5 H6.2 V8.5 H8.8 V6.5 H11 V8.5 H12.8 V6.5 H15 V14.5 Z" fill="#c5c5c5"/><rect x="2.8" y="10.5" width="2" height="1.8" fill="#1b1b1c"/><rect x="6.5" y="10.5" width="2" height="1.8" fill="#1b1b1c"/><rect x="10.2" y="10.5" width="2" height="1.8" fill="#1b1b1c"/></svg>
<svg style="left:800px;top:294px" width="15" height="13" viewBox="0 0 15 13"><circle cx="6.2" cy="6.5" r="5.4" fill="none" stroke="#c5c5c5" stroke-width="1.4"/><path d="M1 6.5 H11.4 M6.2 1.2 V11.8 M2.2 3.4 H10.2 M2.2 9.6 H8" stroke="#c5c5c5" stroke-width="1"/><path d="M8.2 11 Q13.2 10.6 12.6 5.8 M10.4 7.4 L12.7 5 L14.8 7.6" fill="none" stroke="#c5c5c5" stroke-width="1.6"/></svg>
<svg style="left:800px;top:366.5px" width="14" height="13" viewBox="0 0 14 13"><path d="M3.2 2.8 V0.6 H13.4 V8.6 H11.6" fill="none" stroke="#c5c5c5" stroke-width="1.1"/><rect x="0.6" y="3.4" width="10.4" height="9" fill="none" stroke="#c5c5c5" stroke-width="1.2"/><path d="M0.6 5.4 H11 M2.4 7.6 H4 M5.2 7.6 H9.4 M2.4 10 H4 M5.2 10 H9.4" stroke="#c5c5c5" stroke-width="1"/></svg>
<svg style="left:802px;top:414px" width="11" height="13" viewBox="0 0 11 13"><rect x="0" y="4.2" width="10.6" height="8.6" fill="#c5c5c5"/><rect x="2" y="6.2" width="2.6" height="2.2" fill="#333334"/><rect x="6" y="6.2" width="2.6" height="2.2" fill="#333334"/><rect x="2" y="9.6" width="2.6" height="2" fill="#333334"/><rect x="6" y="9.6" width="2.6" height="2" fill="#333334"/><circle cx="3" cy="1.8" r="1.7" fill="#c5c5c5"/><circle cx="7.6" cy="1.8" r="1.7" fill="#c5c5c5"/></svg>
<svg style="left:800px;top:438.5px" width="14" height="14" viewBox="0 0 14 14"><rect x="5.6" y="0" width="2.8" height="14" rx="0.4" fill="#c5c5c5" transform="rotate(0 7 7)"/><rect x="5.6" y="0" width="2.8" height="14" rx="0.4" fill="#c5c5c5" transform="rotate(45 7 7)"/><rect x="5.6" y="0" width="2.8" height="14" rx="0.4" fill="#c5c5c5" transform="rotate(90 7 7)"/><rect x="5.6" y="0" width="2.8" height="14" rx="0.4" fill="#c5c5c5" transform="rotate(135 7 7)"/><circle cx="7" cy="7" r="5" fill="#c5c5c5"/><circle cx="7" cy="7" r="2.2" fill="#1b1b1c"/></svg>
<svg style="left:801px;top:510.5px" width="12" height="14" viewBox="0 0 12 14"><path d="M2.2 0.4 L8.6 9.6 M9.8 0.4 L3.4 9.6" stroke="#c5c5c5" stroke-width="1.4"/><circle cx="2.8" cy="11.2" r="2.1" fill="none" stroke="#c5c5c5" stroke-width="1.3"/><circle cx="9.2" cy="11.2" r="2.1" fill="none" stroke="#c5c5c5" stroke-width="1.3"/></svg>
<svg style="left:800px;top:532px" width="14" height="15" viewBox="0 0 14 15"><path d="M3.5 3.5 V1.8 H5.2 V0.5 H8.4 V1.8 H10 V3.5 Z" fill="none" stroke="#4a4a4c" stroke-width="1"/><path d="M2.2 2.6 H0.6 V13.4 H5.4" fill="none" stroke="#4a4a4c" stroke-width="1"/><path d="M11.4 2.6 H12.4 V5.4" fill="none" stroke="#4a4a4c" stroke-width="1"/><rect x="6.4" y="6.4" width="6.8" height="8" fill="none" stroke="#4a4a4c" stroke-width="1"/></svg>
<svg style="left:800px;top:555px" width="13" height="13" viewBox="0 0 13 13"><path d="M1 1 L12 12 M12 1 L1 12" stroke="#f06a50" stroke-width="2.4"/></svg>
<svg style="left:799px;top:577.5px" width="16" height="12" viewBox="0 0 16 12"><path d="M0.5 0.5 H2 M3.6 0.5 H5 M2.8 0.5 V11.5 M0.5 11.5 H2 M3.6 11.5 H5" stroke="#c5c5c5" stroke-width="1"/><rect x="1.2" y="3" width="13.6" height="6.4" fill="none" stroke="#c5c5c5" stroke-width="1" stroke-dasharray="1 1"/></svg>
<svg style="left:800px;top:626px" width="14" height="14" viewBox="0 0 14 14"><path d="M3.4 13.6 Q-0.6 6.2 5.6 5.4 H9" fill="none" stroke="#c5c5c5" stroke-width="2.6"/><path d="M8 0.6 L13.6 5.4 L8 10.2 Z" fill="#c5c5c5"/></svg>
<svg style="left:801px;top:652px" width="13" height="13" viewBox="0 0 13 13"><path d="M1.6 11.4 L6.8 6.2" stroke="#c5c5c5" stroke-width="3.2" stroke-linecap="round"/><circle cx="8.4" cy="4.6" r="3.9" fill="#c5c5c5"/><path d="M8.6 4.4 L12.6 0.4" stroke="#1b1b1c" stroke-width="2.6"/></svg>
</div></body></html>
